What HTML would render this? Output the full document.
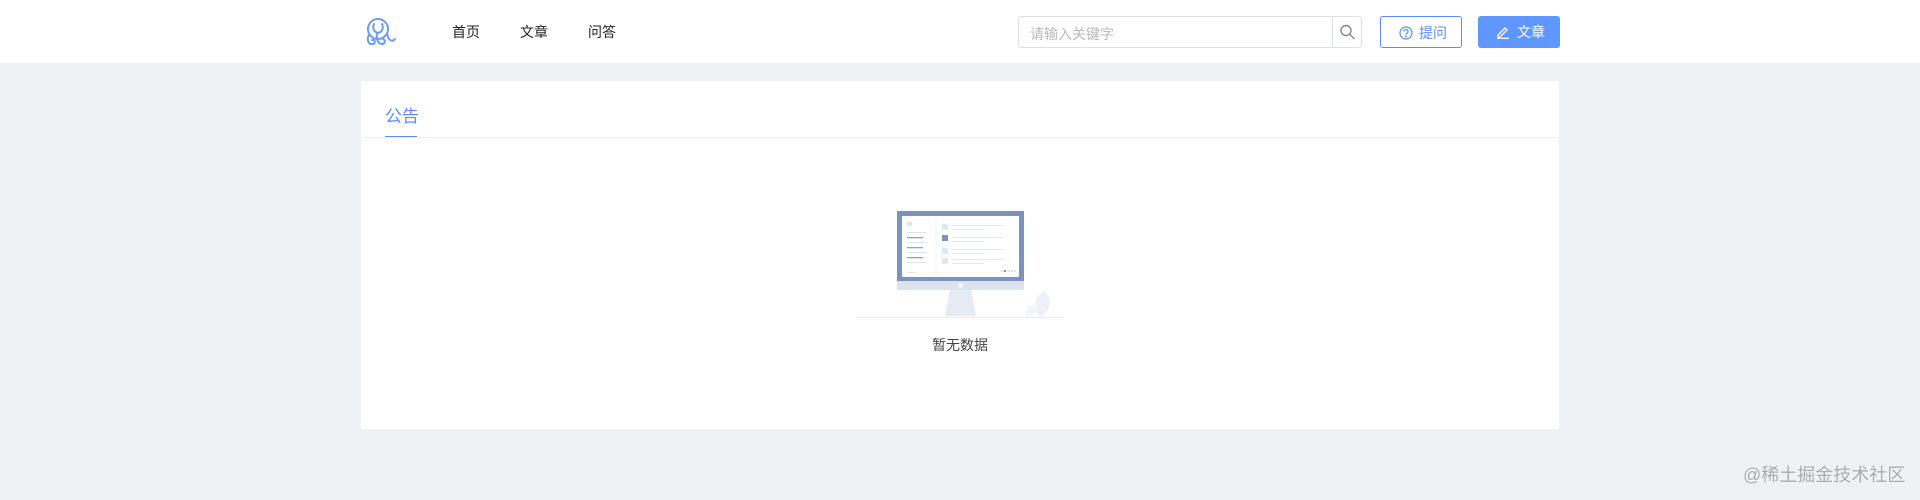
<!DOCTYPE html>
<html><head><meta charset="utf-8"><style>
*{margin:0;padding:0;box-sizing:border-box}
body{width:1920px;height:500px;background:#f0f1f5;font-family:"Liberation Sans","Noto Sans CJK SC",sans-serif;position:relative;overflow:hidden}
.hd{position:absolute;left:0;top:0;width:1920px;height:63px;background:#fff}
.a{position:absolute}
.nav{font-size:14px;color:#222;top:22px}
.search{left:1018px;top:16px;width:344px;height:32px;border:1px solid #dcdfe6;border-radius:3px;background:#fff}
.search span{position:absolute;left:11px;top:7px;font-size:14px;color:#bbb}
.search .sb{position:absolute;left:313px;top:0;width:29px;height:30px;border-left:1px solid #dcdfe6}
.ask{left:1380px;top:16px;width:82px;height:32px;border:1px solid #5b8cf8;border-radius:3px;color:#5b8cf8;font-size:14px;background:#fff}
.art{left:1478px;top:16px;width:82px;height:32px;border-radius:3px;background:#6096ff;color:#fff;font-size:14px}
.card{left:361px;top:81px;width:1198px;height:348px;background:#fff}
</style></head><body>
<div class="hd"></div>
<svg class="a" style="left:364px;top:16px" width="34" height="32" viewBox="0 0 34 32" fill="none" stroke="#6a9cf5" stroke-width="2" stroke-linecap="round">
<circle cx="14" cy="13" r="10"/>
<path d="M10 8 C8 12 10 16 14 17 C18 16 20 12 18 8"/>
<path d="M5 19 C2 24 5 29 9 28 C12 27 11 23 8 24"/>
<path d="M13 17 C12 23 14 28 18 28 C21 28 22 24 19 23"/>
<path d="M23 17 C24 24 28 27 31 23"/>
</svg>
<div class="a nav" style="left:452px">首页</div>
<div class="a nav" style="left:520px">文章</div>
<div class="a nav" style="left:588px">问答</div>
<div class="a search"><span>请输入关键字</span><div class="sb"><svg width="29" height="30" viewBox="0 0 29 30" fill="none" stroke="#888" stroke-width="1.4"><circle cx="13" cy="13.5" r="5"/><path d="M16.5 17l5 5"/></svg></div></div>
<div class="a ask"><svg class="a" style="left:18px;top:9px" width="14" height="14" viewBox="0 0 14 14" fill="none" stroke="#5b8cf8" stroke-width="1.2"><circle cx="7" cy="7" r="6"/><path d="M5 5.5a2 2 0 1 1 2.5 2c-.5.2-.5.6-.5 1.2"/><circle cx="7" cy="10.5" r=".4" fill="#5b8cf8"/></svg><span class="a" style="left:38px;top:6px">提问</span></div>
<div class="a art"><svg class="a" style="left:18px;top:9px" width="14" height="14" viewBox="0 0 14 14" fill="none" stroke="#fff" stroke-width="1.3"><path d="M2 10l7-7 2 2-7 7H2z"/><path d="M1 13.3h12"/></svg><span class="a" style="left:39px;top:6px">文章</span></div>
<div class="a card">
<div class="a" style="left:24px;top:21px;font-size:17px;color:#5b8cf8">公告</div>
<div class="a" style="left:24px;top:55px;width:32px;height:2px;background:#5b8cf8"></div>
<div class="a" style="left:0;top:56px;width:1198px;height:1px;background:#eceef2"></div>
<svg class="a" style="left:496px;top:128px" width="210" height="110" viewBox="0 0 210 110">
<path d="M183 108 C174 100 176 88 188 82 C196 92 194 102 183 108Z" fill="#eef1f7"/>
<path d="M170 108 C166 100 172 94 180 96 C182 102 178 106 170 108Z" fill="#f3f5f9"/>
<rect x="40" y="2" width="127" height="70" fill="#7b93c2"/>
<rect x="40" y="72" width="127" height="9" fill="#dde3ee"/>
<circle cx="103.5" cy="76.5" r="2" fill="#fff"/>
<path d="M93 81h21l5 26H88z" fill="#e6eaf2"/>
<rect x="45" y="7" width="117" height="61" fill="#fff"/>
<line x1="79" y1="8" x2="79" y2="67" stroke="#eef1f6"/>
<g fill="#dde4f0"><rect x="50" y="13" width="5" height="4"/><rect x="50" y="23" width="20" height="1"/><rect x="50" y="33" width="20" height="1"/><rect x="50" y="43" width="20" height="1"/><rect x="50" y="53" width="20" height="1"/><rect x="50" y="63" width="8" height="1"/></g>
<g fill="#8aa2d2"><rect x="50" y="28" width="16" height="1.3"/><rect x="50" y="38" width="16" height="1.3"/><rect x="50" y="48" width="16" height="1.3"/></g>
<g fill="#e3e8f2"><rect x="85" y="15" width="6" height="6"/><rect x="85" y="39" width="6" height="6"/><rect x="85" y="49" width="6" height="6"/><rect x="95" y="16" width="52" height="1"/><rect x="95" y="20" width="32" height="1"/><rect x="95" y="28" width="52" height="1"/><rect x="95" y="32" width="32" height="1"/><rect x="95" y="40" width="52" height="1"/><rect x="95" y="44" width="32" height="1"/><rect x="95" y="50" width="52" height="1"/><rect x="95" y="54" width="32" height="1"/></g>
<rect x="85" y="26" width="6" height="6" fill="#7b93c2"/>
<g fill="#dde4f0"><rect x="144" y="61" width="2" height="2"/><rect x="151" y="61" width="2" height="2"/><rect x="154" y="61" width="2" height="2"/><rect x="157" y="61" width="2" height="2"/></g><rect x="147" y="61" width="2" height="2" fill="#7b93c2"/>
<rect x="0" y="108" width="206" height="1" fill="#e9ecf2"/>
</svg>
<div class="a" style="left:0;width:1198px;top:254px;text-align:center;font-size:14px;color:#444">暂无数据</div>
</div>
<div class="a" style="left:1743px;top:461px;font-size:18px;color:#aaa;text-shadow:0 0 1px #fff">@稀土掘金技术社区</div>
</body></html>
